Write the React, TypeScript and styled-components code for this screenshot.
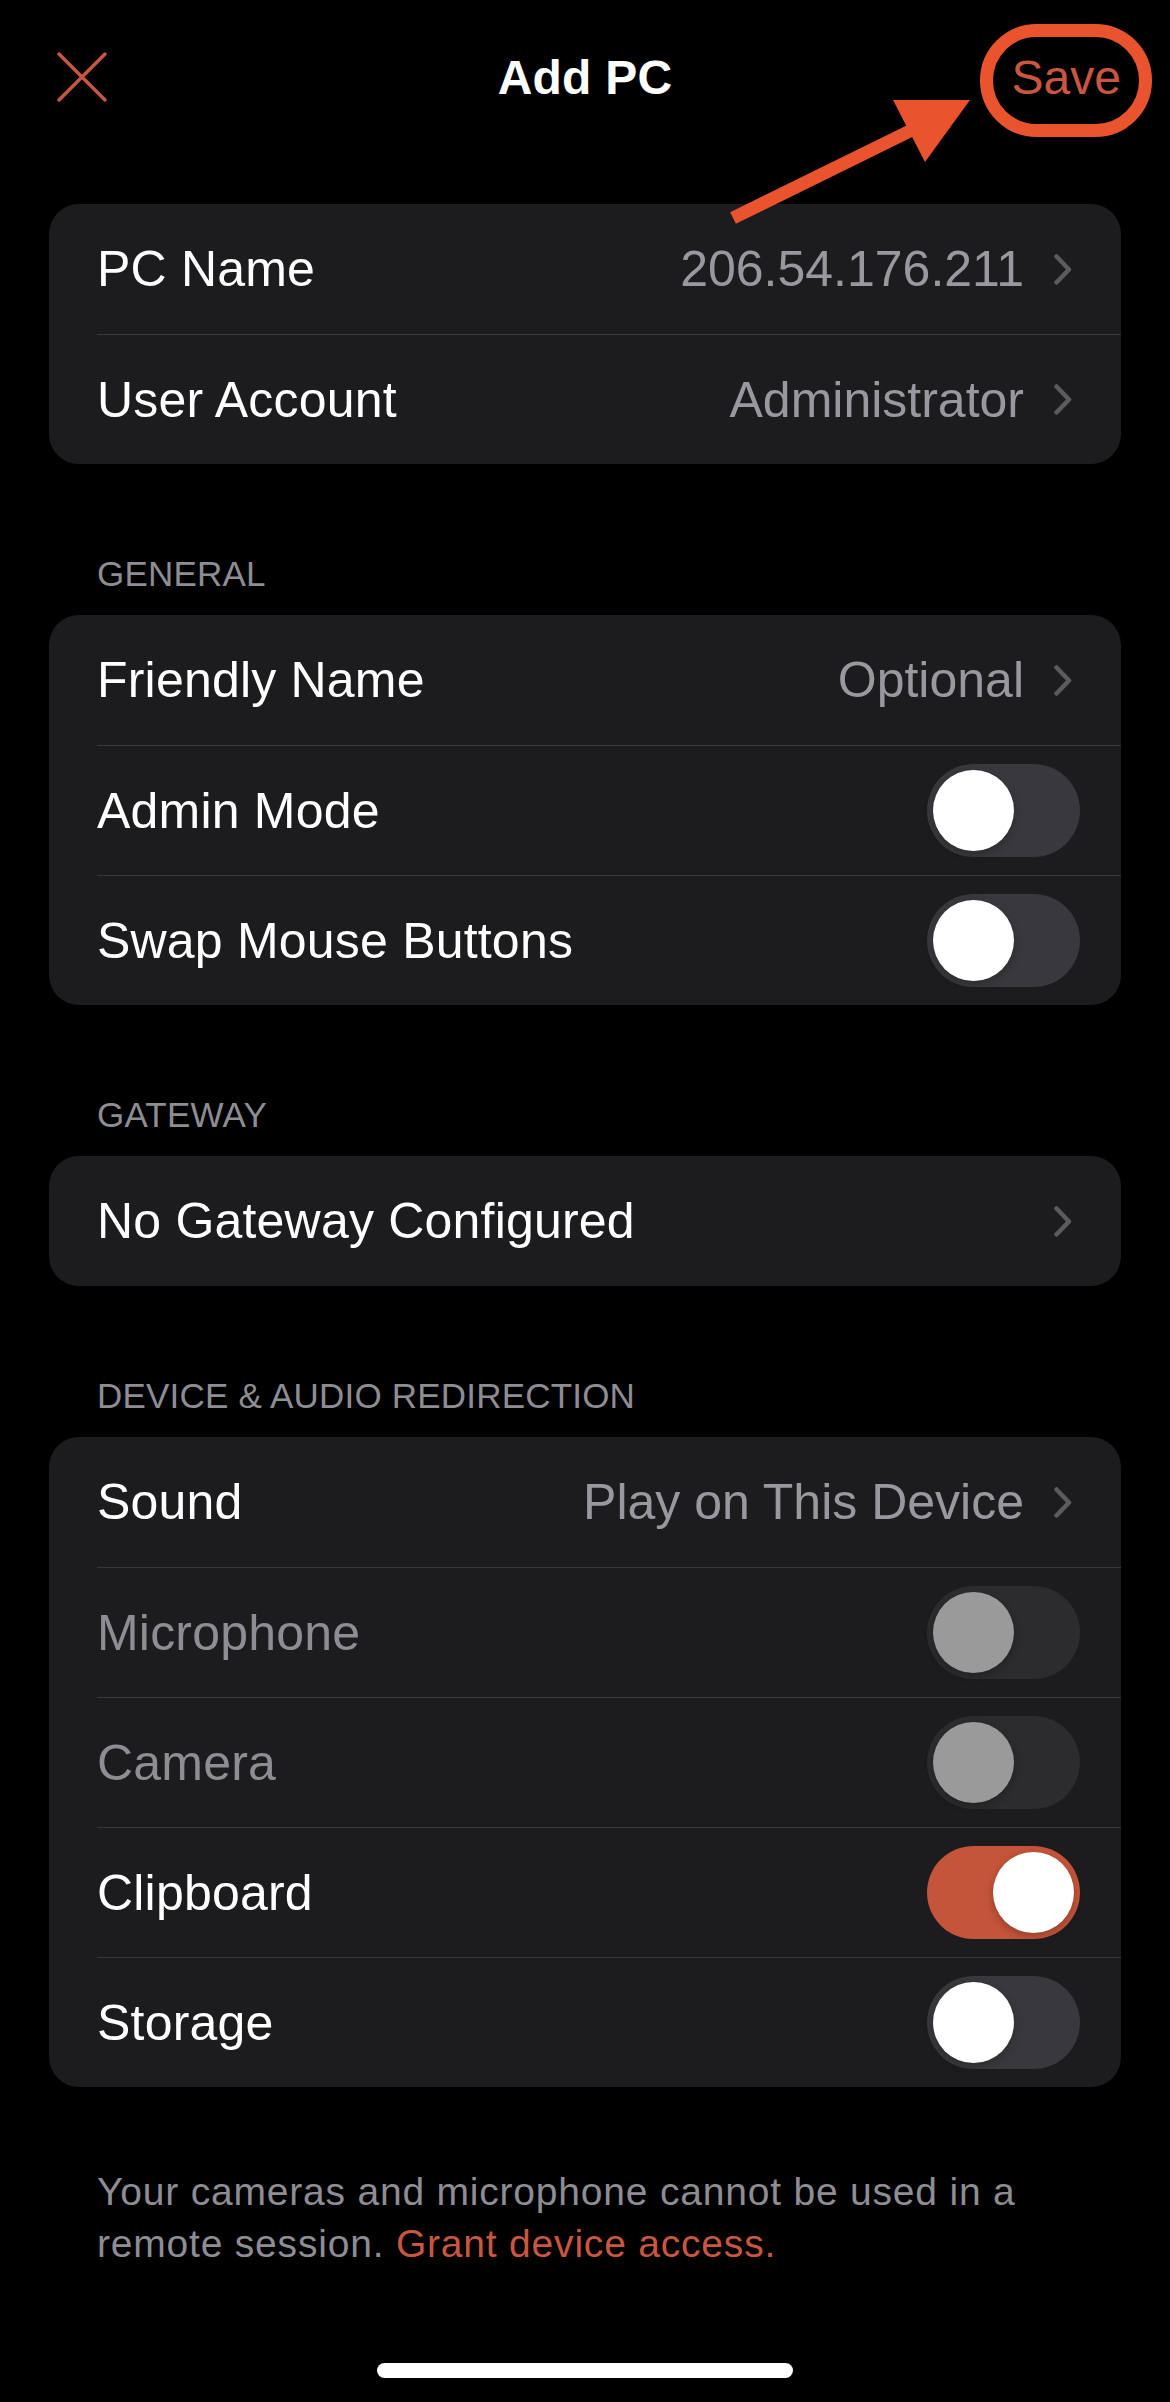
import React from "react";
import styled, { createGlobalStyle } from "styled-components";

//#region STYLES
const GlobalStyle = createGlobalStyle`
html, body {
    margin: 0;
    padding: 0;
    background: #000;
}
body {
    font-family: "Liberation Sans", Arial, sans-serif;
    -webkit-font-smoothing: antialiased;
}
`

const Page = styled.div`
position: relative;
width: 1170px;
min-height: 2402px;
box-sizing: border-box;
padding: 0 49px;
background: #000;
color: #fff;
`

const Header = styled.header`
display: grid;
grid-template-columns: 1fr auto 1fr;
align-items: center;
height: 154px;
margin-bottom: 50px;
`

const CloseButton = styled.button`
justify-self: start;
display: flex;
background: none;
border: 0;
padding: 0;
margin-left: 7px;
cursor: pointer;
`

const Title = styled.h1`
margin: 0;
font-size: 48px;
font-weight: 700;
letter-spacing: 0.2px;
`

const SaveButton = styled.button`
justify-self: end;
background: none;
border: 0;
padding: 0;
margin-right: 0;
font-family: inherit;
font-size: 48px;
color: #c9573f;
cursor: pointer;
`

const Annotation = styled.svg`
position: absolute;
top: 0;
left: 0;
pointer-events: none;
`

const SectionLabel = styled.div`
margin: 86px 0 17px 48px;
font-size: 35px;
line-height: 48px;
text-transform: uppercase;
color: #8d8d93;
letter-spacing: 0.2px;
`

const Card = styled.section`
background: #1c1c1e;
border-radius: 30px;
overflow: hidden;
`

const Row = styled.div`
padding-left: 48px;

& + & > div {
    border-top: 1.5px solid #38383a;
}
`

const RowInner = styled.div.attrs((props: { $toggle?: boolean }) => props)`
display: flex;
align-items: center;
height: 130px;
box-sizing: border-box;
padding-right: ${props => props.$toggle ? '41px' : '49px'};
`

const Label = styled.span.attrs((props: { $disabled?: boolean }) => props)`
flex: 1;
font-size: 50px;
letter-spacing: 0.2px;
color: ${props => props.$disabled ? '#8d8d93' : '#fff'};
`

const Value = styled.span`
font-size: 50px;
color: #98989f;
margin-right: 30px;
`

const Track = styled.div.attrs((props: { $on?: boolean, $disabled?: boolean }) => props)`
position: relative;
width: 153px;
height: 93px;
border-radius: 47px;
background: ${props => props.$on ? '#c4543a' : props.$disabled ? '#2c2c2e' : '#39393d'};
`

const Knob = styled.div.attrs((props: { $on?: boolean, $disabled?: boolean }) => props)`
position: absolute;
top: 6px;
left: ${props => props.$on ? '66px' : '6px'};
width: 81px;
height: 81px;
border-radius: 50%;
background: ${props => props.$disabled ? '#9a9a9a' : '#fff'};
box-shadow: 0 3px 8px rgba(0, 0, 0, 0.25);
`

const Footer = styled.p`
margin: 79px 0 0 48px;
padding-right: 40px;
font-size: 39px;
line-height: 52px;
letter-spacing: 0.8px;
color: #8d8d93;

a {
    color: #c9573f;
    text-decoration: none;
}
`

const HomeIndicator = styled.div`
width: 416px;
height: 15px;
margin: 93px auto 0;
border-radius: 8px;
background: #fff;
`
//#endregion

const Chevron = () => (
    <svg width="18" height="31" viewBox="0 0 18 31">
        <path d="M2.5 2.5 L15 15.5 L2.5 28.5" fill="none" stroke="#5b5b5f" strokeWidth="4.5"
              strokeLinecap="round" strokeLinejoin="round"/>
    </svg>
)

const CloseIcon = () => (
    <svg width="52" height="52" viewBox="0 0 52 52">
        <path d="M3 3 L49 49 M49 3 L3 49" stroke="#c9573f" strokeWidth="3.5" strokeLinecap="round"/>
    </svg>
)

type Item =
    | { kind: 'link', label: string, value?: string }
    | { kind: 'toggle', label: string, on?: boolean, disabled?: boolean }

const LinkRow = ({label, value}: { label: string, value?: string }) => (
    <Row>
        <RowInner>
            <Label>{label}</Label>
            {value && <Value>{value}</Value>}
            <Chevron/>
        </RowInner>
    </Row>
)

const ToggleRow = ({label, on, disabled}: { label: string, on?: boolean, disabled?: boolean }) => (
    <Row>
        <RowInner $toggle>
            <Label $disabled={disabled}>{label}</Label>
            <Track $on={on} $disabled={disabled}>
                <Knob $on={on} $disabled={disabled}/>
            </Track>
        </RowInner>
    </Row>
)

const Group = ({items}: { items: Item[] }) => (
    <Card>
        {items.map(item => item.kind === 'link'
            ? <LinkRow key={item.label} label={item.label} value={item.value}/>
            : <ToggleRow key={item.label} label={item.label} on={item.on} disabled={item.disabled}/>)}
    </Card>
)

export default function App() {
    return (
        <Page>
            <GlobalStyle/>
            <Header>
                <CloseButton aria-label="Close"><CloseIcon/></CloseButton>
                <Title>Add PC</Title>
                <SaveButton>Save</SaveButton>
            </Header>

            <Group items={[
                {kind: 'link', label: 'PC Name', value: '206.54.176.211'},
                {kind: 'link', label: 'User Account', value: 'Administrator'},
            ]}/>

            <SectionLabel>General</SectionLabel>
            <Group items={[
                {kind: 'link', label: 'Friendly Name', value: 'Optional'},
                {kind: 'toggle', label: 'Admin Mode'},
                {kind: 'toggle', label: 'Swap Mouse Buttons'},
            ]}/>

            <SectionLabel>Gateway</SectionLabel>
            <Group items={[
                {kind: 'link', label: 'No Gateway Configured'},
            ]}/>

            <SectionLabel>Device &amp; Audio Redirection</SectionLabel>
            <Group items={[
                {kind: 'link', label: 'Sound', value: 'Play on This Device'},
                {kind: 'toggle', label: 'Microphone', disabled: true},
                {kind: 'toggle', label: 'Camera', disabled: true},
                {kind: 'toggle', label: 'Clipboard', on: true},
                {kind: 'toggle', label: 'Storage'},
            ]}/>

            <Footer>
                Your cameras and microphone cannot be used in a remote session. <a href="#">Grant device access.</a>
            </Footer>

            <HomeIndicator/>

            {/* highlight drawn over the screenshot */}
            <Annotation width="1170" height="240" viewBox="0 0 1170 240">
                <rect x="986.5" y="30.5" width="159" height="100" rx="50" fill="none" stroke="#e9532e" strokeWidth="13"/>
                <line x1="733" y1="218" x2="912" y2="130" stroke="#e9532e" strokeWidth="13"/>
                <polygon points="970,100 893,100 925,162" fill="#e9532e"/>
            </Annotation>
        </Page>
    )
}
